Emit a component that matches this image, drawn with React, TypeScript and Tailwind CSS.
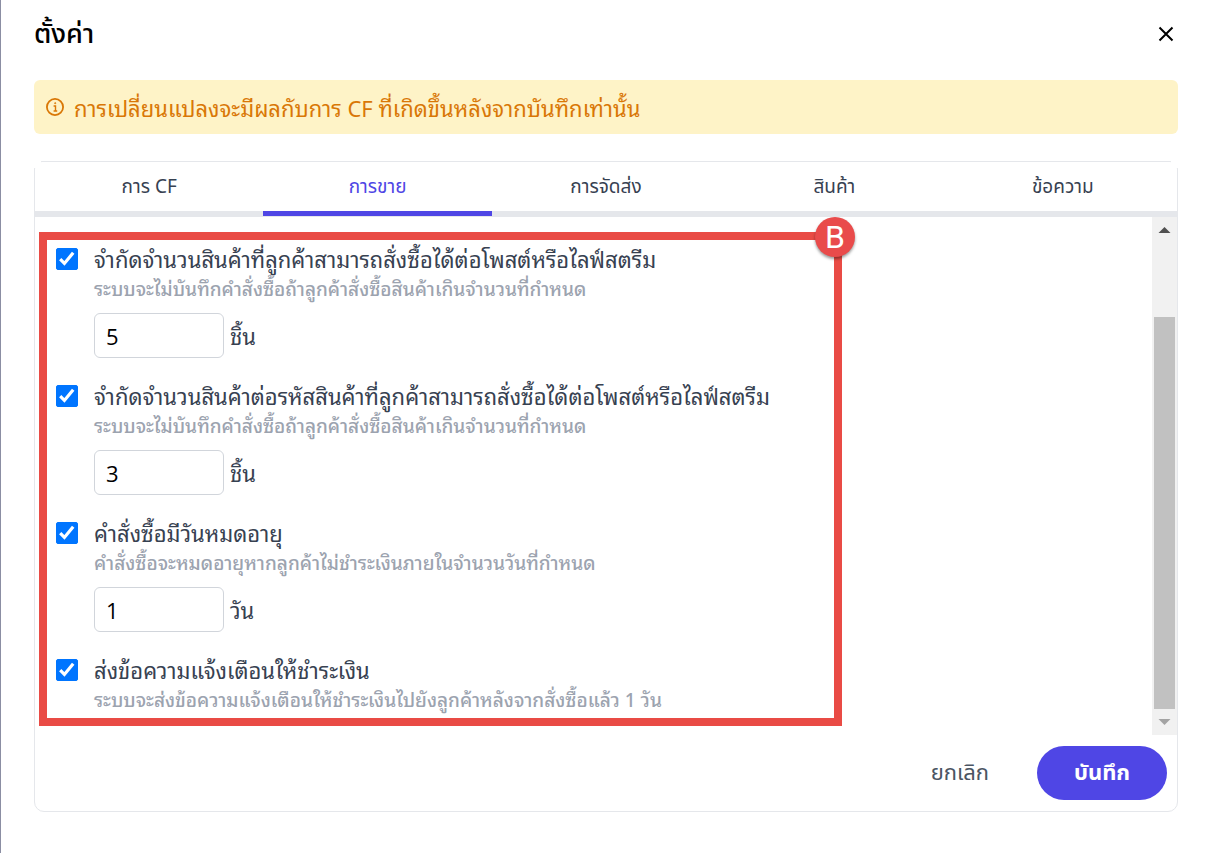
import { useState } from "react";

interface Option {
  id: string;
  title: string;
  note: string;
  amount?: number;
  unit?: string;
}

const tabs = ["การ CF", "การขาย", "การจัดส่ง", "สินค้า", "ข้อความ"];

const options: Option[] = [
  {
    id: "limit-order",
    title: "จำกัดจำนวนสินค้าที่ลูกค้าสามารถสั่งซื้อได้ต่อโพสต์หรือไลฟ์สตรีม",
    note: "ระบบจะไม่บันทึกคำสั่งซื้อถ้าลูกค้าสั่งซื้อสินค้าเกินจำนวนที่กำหนด",
    amount: 5,
    unit: "ชิ้น",
  },
  {
    id: "limit-code",
    title: "จำกัดจำนวนสินค้าต่อรหัสสินค้าที่ลูกค้าสามารถสั่งซื้อได้ต่อโพสต์หรือไลฟ์สตรีม",
    note: "ระบบจะไม่บันทึกคำสั่งซื้อถ้าลูกค้าสั่งซื้อสินค้าเกินจำนวนที่กำหนด",
    amount: 3,
    unit: "ชิ้น",
  },
  {
    id: "expire",
    title: "คำสั่งซื้อมีวันหมดอายุ",
    note: "คำสั่งซื้อจะหมดอายุหากลูกค้าไม่ชำระเงินภายในจำนวนวันที่กำหนด",
    amount: 1,
    unit: "วัน",
  },
  {
    id: "remind",
    title: "ส่งข้อความแจ้งเตือนให้ชำระเงิน",
    note: "ระบบจะส่งข้อความแจ้งเตือนให้ชำระเงินไปยังลูกค้าหลังจากสั่งซื้อแล้ว 1 วัน",
  },
];

function OptionRow({ option }: { option: Option }) {
  const [checked, setChecked] = useState(true);
  const [amount, setAmount] = useState(String(option.amount ?? ""));

  return (
    <div className="flex items-start gap-4">
      <span className="relative mt-0.5 flex shrink-0">
        <input
          id={option.id}
          type="checkbox"
          checked={checked}
          onChange={(e) => setChecked(e.target.checked)}
          className="h-[22px] w-[22px] appearance-none rounded-xs border border-gray-400 checked:border-[#0075ff] checked:bg-[#0075ff]"
        />
        {checked && (
          <svg viewBox="0 0 22 22" className="pointer-events-none absolute inset-0" fill="none" stroke="#fff" strokeWidth="3.2">
            <path d="M4.2 11.2 8.4 15.4 17.2 4.8" />
          </svg>
        )}
      </span>
      <div className="font-['Noto_Sans_Thai_Looped','Noto_Sans_Thai','Noto_Sans',sans-serif]">
        <label htmlFor={option.id} className="block text-[22px] leading-6 whitespace-nowrap text-[#374151]">
          {option.title}
        </label>
        <p className="mt-1 text-[19px] leading-7 font-medium whitespace-nowrap text-[#9ca3af]">{option.note}</p>
        {option.unit && (
          <div className="mt-[11px] flex items-center gap-1.5">
            <input
              type="text"
              aria-label={option.title}
              value={amount}
              onChange={(e) => setAmount(e.target.value)}
              className="h-[45px] w-[130px] rounded-md border border-[#d1d5db] px-[11px] font-['Open_Sans',sans-serif] text-[22px] text-black"
            />
            <span className="text-[22px] text-[#374151]">{option.unit}</span>
          </div>
        )}
      </div>
    </div>
  );
}

export default function App() {
  const [tab, setTab] = useState(1);

  return (
    <div className="min-h-screen border-l border-[#8b8ea3] bg-white pr-8 pb-[41px] pl-[33px] font-['Noto_Sans_Thai','Noto_Sans',sans-serif]">
      <header className="flex h-20 items-start justify-between pt-4">
        <h1 className="text-[27px] leading-[38px] font-medium text-black">ตั้งค่า</h1>
        <button aria-label="ปิด" className="mt-1.5 p-1">
          <svg width="16" height="16" viewBox="0 0 16 16" fill="none" stroke="#000" strokeWidth="2">
            <path d="M1.5 1.5 14.5 14.5M14.5 1.5 1.5 14.5" />
          </svg>
        </button>
      </header>

      <div className="flex h-[54px] items-center gap-2.5 rounded-md bg-[#fef3c7] px-3 text-[#d97706]">
        <svg width="18" height="18" viewBox="0 0 18 18" fill="none" stroke="currentColor" strokeWidth="1.8">
          <circle cx="9" cy="9" r="8.1" />
          <path d="M7.6 8H9.5V13M7.6 13H11.2" strokeWidth="1.4" />
          <circle cx="9.2" cy="5.2" r="0.6" fill="currentColor" strokeWidth="0.8" />
        </svg>
        <p className="font-['Noto_Sans_Thai_Looped','Noto_Sans_Thai','Noto_Sans',sans-serif] text-[22px]">
          การเปลี่ยนแปลงจะมีผลกับการ CF ที่เกิดขึ้นหลังจากบันทึกเท่านั้น
        </p>
      </div>

      <main className="relative mt-[27px] rounded-t-lg rounded-b-[10px] border border-[#e5e7eb]">
        <span className="absolute -top-px -left-px h-[7px] w-[7px] bg-white" />
        <span className="absolute -top-px -right-px h-[7px] w-[7px] bg-white" />

        <nav className="grid grid-cols-5">
          {tabs.map((name, i) => (
            <button
              key={name}
              onClick={() => setTab(i)}
              className={
                i === tab
                  ? "flex flex-col border-b border-[#e5e7eb] text-[19px] text-[#4f46e5]"
                  : "flex flex-col border-b border-[#e5e7eb] text-[19px] text-[#374151]"
              }
            >
              <span className="flex h-[49px] w-full items-center justify-center pt-1">{name}</span>
              <span className={i === tab ? "h-[5px] w-full bg-[#4f46e5]" : "h-[5px] w-full bg-[#e5e7eb]"} />
            </button>
          ))}
        </nav>

        <div className="flex justify-between">
          <section className="min-w-0 grow pt-[15px] pb-[9px] pl-1">
            <div className="relative flex w-[803px] max-w-full flex-col gap-[25px] border-8 border-[#e94b45] pt-1.5 pb-[5px] pl-[9px]">
              {options.map((option) => (
                <OptionRow key={option.id} option={option} />
              ))}
              <span className="absolute -top-[23px] -right-[21px] flex h-10 w-10 items-center justify-center rounded-full bg-[#e94b4b] font-[Roboto,sans-serif] text-[32px] text-white shadow-[0_2px_3px_rgba(0,0,0,0.4)]">
                B
              </span>
            </div>
          </section>
          <div className="flex w-[25px] shrink-0 flex-col items-center bg-[#f1f1f1]">
            <svg width="25" height="100" viewBox="0 0 25 100">
              <path d="M6.5 16 12.5 10 18.5 16Z" fill="#505050" />
            </svg>
            <div className="w-[21px] grow bg-[#c1c1c1]" />
            <svg width="25" height="26" viewBox="0 0 25 26">
              <path d="M6.5 10 12.5 16 18.5 10Z" fill="#a3a3a3" />
            </svg>
          </div>
        </div>

        <footer className="flex justify-end gap-6 px-2.5 py-[11px]">
          <button className="px-6 text-[22px] text-[#4b5563]">ยกเลิก</button>
          <button className="h-[54px] w-[130px] rounded-full bg-[#4f46e5] text-[22px] font-bold text-white">บันทึก</button>
        </footer>
      </main>
    </div>
  );
}
